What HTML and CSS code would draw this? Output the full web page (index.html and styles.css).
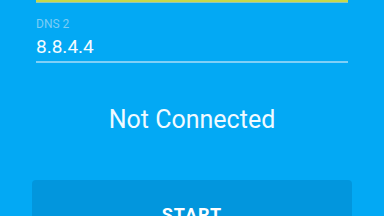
FILE: index.html
```html
<!DOCTYPE html>
<html lang="en">
<head>
<meta charset="UTF-8">
<meta name="viewport" content="width=device-width, initial-scale=1.0">
<title>DNS</title>
<link rel="stylesheet" href="styles.css">
</head>
<body>

<div class="screen">
  <div class="field field-active">
    <div class="field-line"></div>
  </div>
  <div class="field">
    <label class="field-label">DNS 2</label>
    <div class="field-value">8.8.4.4</div>
    <div class="field-line"></div>
  </div>
  <div class="status">Not Connected</div>
  <button class="start">START</button>
</div>

</body>
</html>
```

FILE: styles.css
```css
body {
  margin: 0;
  background: #03a9f4;
  font-family: Roboto, "Noto Sans", sans-serif;
  color: #fff;
  overflow: hidden;
}
.screen {
  display: flex;
  flex-direction: column;
  padding: 0 36px;
}
.field-active .field-line {
  height: 3px;
  margin-top: 0;
  background: linear-gradient(#c6d84a 0, #c6d84a 2px, #8cc6c0 2px);
}
.field {
  display: flex;
  flex-direction: column;
}
.field-label {
  margin-top: 14px;
  font-size: 12px;
  line-height: 14px;
  color: #7ccdf4;
}
.field-value {
  margin-top: 5px;
  font-size: 19px;
  line-height: 22px;
  color: #f4fbff;
}
.field-line {
  height: 2px;
  margin-top: 3px;
  background: #7fd0f7;
}
.status {
  margin-top: 42px;
  text-align: center;
  font-size: 25px;
  line-height: 30px;
  color: #f0faff;
}
.start {
  margin: 45px -4px 0;
  padding: 24px 0 20px;
  border: none;
  border-radius: 4px;
  background: #0296dd;
  color: #fff;
  font-family: Roboto, sans-serif;
  font-size: 18px;
  line-height: 21px;
  font-weight: bold;
  letter-spacing: 1px;
}
```
